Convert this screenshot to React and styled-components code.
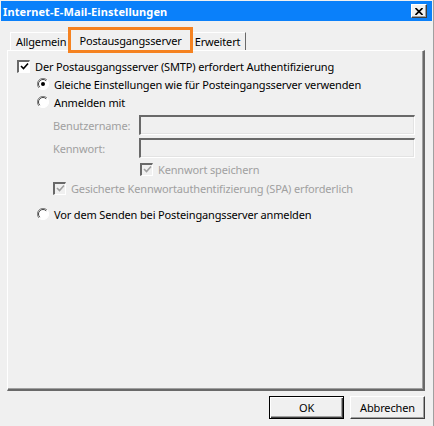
import React from 'react';
import styled, { createGlobalStyle } from 'styled-components';

const GlobalStyle = createGlobalStyle`
  html, body {
    margin: 0;
    padding: 0;
    background: #f0f0f0;
  }
  body {
    font-family: "Noto Sans", "Liberation Sans", sans-serif;
    font-size: 11px;
    letter-spacing: -0.15px;
    color: #000;
  }
`;

const Window = styled.div`
  width: 434px;
  height: 426px;
  box-sizing: border-box;
  background: #f0f0f0;
  border-right: 1px solid #a0a0a0;
  padding-top: 1px;
  display: flex;
  flex-direction: column;
`;

const TitleBar = styled.div`
  height: 20px;
  margin: 0 1px 0 1px;
  background: #0a80fa;
  display: flex;
  align-items: center;
  justify-content: space-between;
  padding: 0 5px 0 2px;
`;

const Title = styled.span`
  color: #fff;
  font-weight: bold;
  font-size: 11px;
  letter-spacing: 0.1px;
`;

const CloseButton = styled.div`
  width: 16px;
  height: 14px;
  box-sizing: border-box;
  background: #f0f0f0;
  border-style: solid;
  border-width: 1px;
  border-color: #fff #404040 #404040 #fff;
  box-shadow: inset -1px -1px 0 #a0a0a0;
  display: flex;
  align-items: center;
  justify-content: center;
`;

const TabStrip = styled.div`
  display: flex;
  align-items: flex-end;
  height: 22px;
  margin-top: 7px;
  padding-left: 10px;
`;

const Tab = styled.div`
  height: ${(p) => (p.$active ? 22 : 18)}px;
  box-sizing: border-box;
  padding: 0 ${(p) => (p.$active ? 8 : 5)}px;
  display: flex;
  align-items: center;
  background: #f0f0f0;
  border-top: 1px solid #fff;
  border-left: 1px solid #fff;
  border-right: 1px solid #696969;
  margin-bottom: ${(p) => (p.$active ? -1 : 0)}px;
  position: relative;
  z-index: ${(p) => (p.$active ? 2 : 1)};
  outline: ${(p) => (p.$highlight ? '3px solid #f58220' : 'none')};
  outline-offset: ${(p) => (p.$highlight ? '-1px' : '0')};
  ${(p) => (p.$active ? 'margin-left: -2px; margin-right: -2px;' : '')}
`;

const Panel = styled.div`
  height: 341px;
  margin: 0 8px 0 7px;
  box-sizing: border-box;
  border-style: solid;
  border-width: 1px 2px 2px 1px;
  border-color: #fff #696969 #696969 #fff;
  box-shadow: inset -1px -1px 0 #a0a0a0;
  padding: 6px 0 0 9px;
  display: flex;
  flex-direction: column;
`;

const Row = styled.div`
  display: flex;
  align-items: center;
  height: ${(p) => p.$h || 18}px;
  margin-left: ${(p) => p.$indent || 0}px;
  margin-top: ${(p) => p.$gap || 0}px;
  color: ${(p) => (p.$disabled ? '#a0a0a0' : '#000')};
`;

const Label = styled.span`
  margin-left: ${(p) => p.$gap || 5}px;
  white-space: nowrap;
`;

const FieldLabel = styled.span`
  width: 86px;
  white-space: nowrap;
`;

const Input = styled.div`
  width: 276px;
  height: ${(p) => p.$h || 20}px;
  box-sizing: border-box;
  background: #f0f0f0;
  border-style: solid;
  border-width: 2px 1px 1px 2px;
  border-color: #696969 #fff #fff #696969;
  box-shadow: inset -1px -1px 0 #e3e3e3;
`;

const Box = styled.div`
  width: 13px;
  height: 13px;
  box-sizing: border-box;
  background: ${(p) => (p.$disabled ? '#f0f0f0' : '#fff')};
  border-style: solid;
  border-width: 2px 1px 1px 2px;
  border-color: #696969 #fff #fff #696969;
  display: flex;
  align-items: center;
  justify-content: center;
  flex-shrink: 0;
`;

const Footer = styled.div`
  display: flex;
  justify-content: flex-end;
  gap: 6px;
  padding-right: 8px;
  margin-top: 5px;
`;

const Button = styled.button`
  width: 75px;
  height: 23px;
  box-sizing: border-box;
  font-family: inherit;
  font-size: 11px;
  letter-spacing: inherit;
  color: #000;
  background: #f0f0f0;
  padding: 0;
  border-style: solid;
  border-width: 1px;
  border-color: ${(p) => (p.$default ? '#000' : '#fff #404040 #404040 #fff')};
  box-shadow: ${(p) =>
    p.$default
      ? 'inset 1px 1px 0 #fff, inset -1px -1px 0 #404040, inset -2px -2px 0 #a0a0a0'
      : 'inset -1px -1px 0 #a0a0a0'};
`;

const Check = ({ disabled }) => (
  <Box $disabled={disabled}>
    <svg width="9" height="9" viewBox="0 0 9 9">
      <path
        d="M1 4 L3.5 6.5 L8 1.5"
        fill="none"
        stroke={disabled ? '#a0a0a0' : '#000'}
        strokeWidth="1.6"
      />
    </svg>
  </Box>
);

const Radio = ({ checked }) => (
  <svg width="12" height="12" viewBox="0 0 12 12" style={{ flexShrink: 0 }}>
    <circle cx="6" cy="6" r="5.5" fill="#fff" />
    <path d="M10 2 A5.5 5.5 0 0 0 2 10" fill="none" stroke="#808080" strokeWidth="1" />
    <path d="M9.2 2.8 A4.5 4.5 0 0 0 2.8 9.2" fill="none" stroke="#404040" strokeWidth="1" />
    <path d="M2 10 A5.5 5.5 0 0 0 10 2" fill="none" stroke="#fff" strokeWidth="1" />
    {checked && <circle cx="6" cy="6" r="2" fill="#000" />}
  </svg>
);

const App = () => (
  <>
    <GlobalStyle />
    <Window>
      <TitleBar>
        <Title>Internet-E-Mail-Einstellungen</Title>
        <CloseButton>
          <svg width="8" height="7" viewBox="0 0 8 7">
            <path d="M0.5 0 L7.5 7 M7.5 0 L0.5 7" stroke="#000" strokeWidth="1.6" />
          </svg>
        </CloseButton>
      </TitleBar>

      <TabStrip>
        <Tab>Allgemein</Tab>
        <Tab $active $highlight>Postausgangsserver</Tab>
        <Tab>Erweitert</Tab>
      </TabStrip>

      <Panel>
        <Row>
          <Check />
          <Label>Der Postausgangsserver (SMTP) erfordert Authentifizierung</Label>
        </Row>
        <Row $indent={20}>
          <Radio checked />
          <Label>Gleiche Einstellungen wie für Posteingangsserver verwenden</Label>
        </Row>
        <Row $indent={20}>
          <Radio />
          <Label>Anmelden mit</Label>
        </Row>
        <Row $indent={36} $h={20} $gap={4} $disabled>
          <FieldLabel>Benutzername:</FieldLabel>
          <Input />
        </Row>
        <Row $indent={36} $h={20} $gap={3} $disabled>
          <FieldLabel>Kennwort:</FieldLabel>
          <Input />
        </Row>
        <Row $indent={123} $gap={2} $disabled>
          <Check disabled />
          <Label>Kennwort speichern</Label>
        </Row>
        <Row $indent={36} $gap={1} $disabled>
          <Check disabled />
          <Label>Gesicherte Kennwortauthentifizierung (SPA) erforderlich</Label>
        </Row>
        <Row $indent={20} $gap={8}>
          <Radio />
          <Label>Vor dem Senden bei Posteingangsserver anmelden</Label>
        </Row>
      </Panel>

      <Footer>
        <Button $default>OK</Button>
        <Button>Abbrechen</Button>
      </Footer>
    </Window>
  </>
);

export default App;
